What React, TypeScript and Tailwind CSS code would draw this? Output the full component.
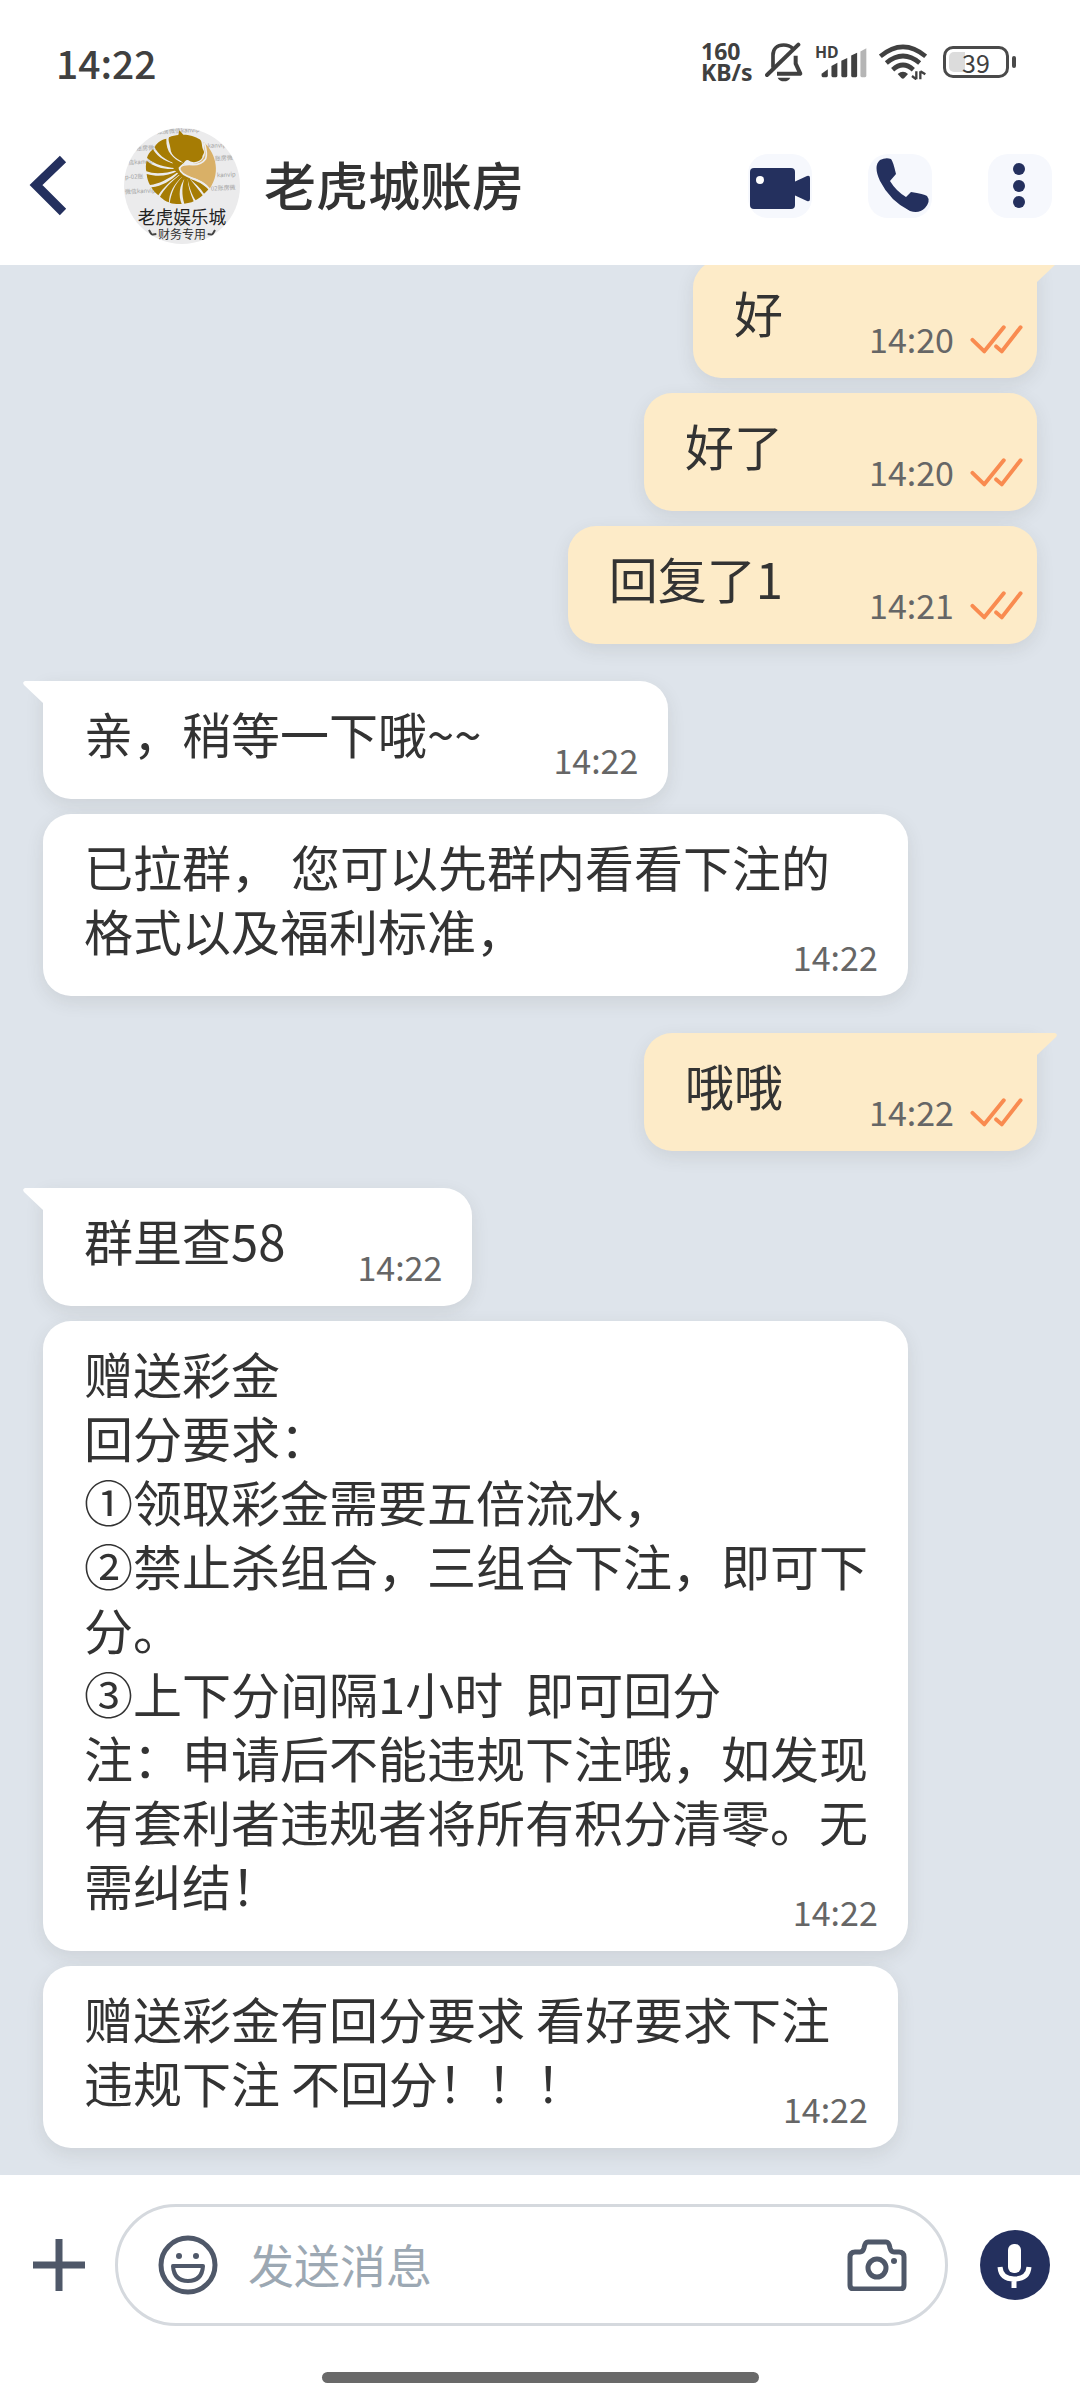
import React, { useState } from "react";

interface Message {
  id: number;
  text: string;
  time: string;
  mine?: boolean;
  // first message of a group, drawn with the little tail
  first?: boolean;
  multiline?: boolean;
}

const messages: Message[] = [
  { id: 1, text: "好", time: "14:20", mine: true, first: true },
  { id: 2, text: "好了", time: "14:20", mine: true },
  { id: 3, text: "回复了1", time: "14:21", mine: true },
  { id: 4, text: "亲，稍等一下哦~~", time: "14:22", first: true },
  { id: 5, text: "已拉群， 您可以先群内看看下注的格式以及福利标准，", time: "14:22", multiline: true },
  { id: 6, text: "哦哦", time: "14:22", mine: true, first: true },
  { id: 7, text: "群里查58", time: "14:22", first: true },
  {
    id: 8,
    text: "赠送彩金\n回分要求：\n①领取彩金需要五倍流水，\n②禁止杀组合，三组合下注，即可下分。\n③上下分间隔1小时  即可回分\n注：申请后不能违规下注哦，如发现有套利者违规者将所有积分清零。无需纠结！",
    time: "14:22",
    multiline: true,
  },
  { id: 9, text: "赠送彩金有回分要求 看好要求下注\n违规下注 不回分！！！", time: "14:22", multiline: true },
];

function StatusBar() {
  return (
    <div className="flex h-[106px] items-center justify-between pt-[18px] pl-14 pr-16 text-[#404040]">
      <span className="text-[39px] leading-none font-medium">14:22</span>
      <div className="flex items-center gap-3">
        <div className="w-[52px] font-['Noto_Sans'] text-[23px] leading-[21px] font-bold">
          <div>160</div>
          <div>KB/s</div>
        </div>
        <svg width="38" height="42" viewBox="20 20 114 126" fill="none" stroke="currentColor">
          <path d="M44 100V62C44 44 56 32 76 32C88 32 97 36 103 42" strokeWidth="11" />
          <path d="M26 122L120 31" strokeWidth="12" strokeLinecap="round" />
          <path d="M112 64V88L126 118H56" strokeWidth="12" strokeLinejoin="round" />
          <path d="M58 130H96C92 138 86 141 77 141C68 141 62 138 58 130Z" fill="currentColor" stroke="none" />
        </svg>
        <svg width="52" height="36" viewBox="166 28 158 104" fill="currentColor">
          <text x="166" y="67" fontSize="48" fontWeight="700" fontFamily="Noto Sans, sans-serif">HD</text>
          <path d="M186 116L205 102V122Q205 126 201 126H190Q186 126 186 122Z" />
          <path d="M216 92L234 82V122Q234 126 230 126H220Q216 126 216 122Z" />
          <path d="M246 76L264 68V122Q264 126 260 126H250Q246 126 246 122Z" />
          <path d="M276 60L294 52V122Q294 126 290 126H280Q276 126 276 122Z" />
          <path d="M304 48L322 38V122Q322 126 318 126H308Q304 126 304 122Z" fill="#b5b5b5" />
        </svg>
        <svg width="48" height="36" viewBox="362 28 144 108" fill="none" stroke="currentColor" strokeWidth="14">
          <path d="M366 65Q434 8 502 65" />
          <path d="M384 85Q434 43 484 85" />
          <path d="M403 105Q434 77 465 105" />
          <path d="M418 118Q434 104 449 118L438 130Q434 134 429 130Z" fill="currentColor" stroke="none" />
          <path d="M474 110V134M486 134V110M474 134L461 124M486 110L501 119" strokeWidth="7" />
        </svg>
        <div className="ml-1 flex items-center gap-[3px]">
          <div className="relative h-8 w-[66px] rounded-[10px] border-[3px] border-[#4a4a4a] p-[3px]">
            <div className="h-full w-4 rounded-l-[5px] bg-[#dcdcdc]" />
            <span className="absolute inset-0 text-center text-[25px] leading-[26px]">39</span>
          </div>
          <div className="h-3 w-1 rounded-full bg-[#4a4a4a]" />
        </div>
      </div>
    </div>
  );
}

function Avatar() {
  return (
    <svg width="116" height="116" viewBox="11 16 348 348" className="shrink-0 rounded-full bg-[#ebebec]">
      <g fill="#a3a3a3" fontSize="18" fontFamily="Noto Sans CJK SC, sans-serif">
        <text x="110" y="34" transform="rotate(-3 110 34)">账房微信kanvip</text>
        <text x="48" y="84" transform="rotate(-3 48 84)">账房微信</text>
        <text x="262" y="76" transform="rotate(-3 262 76)">kanvip</text>
        <text x="24" y="126" transform="rotate(-3 24 126)">信kanvip</text>
        <text x="284" y="114" transform="rotate(-3 284 114)">账房微</text>
        <text x="14" y="170" transform="rotate(-3 14 170)">p-02账</text>
        <text x="290" y="164" transform="rotate(-3 290 164)">kanvip</text>
        <text x="14" y="214" transform="rotate(-3 14 214)">微信kanvip</text>
        <text x="272" y="204" transform="rotate(-3 272 204)">02账房微</text>
      </g>
      {/* tan half of the face */}
      <path d="M250 58C280 84 306 144 268 198C256 180 236 170 212 164C192 158 178 148 179 138C182 122 200 124 218 124C240 122 252 110 254 92Z" fill="#d9b067" />
      {/* head */}
      <path d="M146 44C156 39 166 38 174 37L177 23L189 36C206 36 226 42 238 50C248 58 242 72 250 84C254 92 246 95 246 104C242 116 220 123 208 115C200 109 194 114 190 122C176 108 152 104 150 76C149 64 142 54 146 44Z" fill="#a67c04" />
      {/* mane, fanned out from the cheek */}
      <g fill="#a67c04">
        <path d="M138 48C120 52 108 62 103 74C112 94 134 112 158 120L188 122C158 108 136 88 138 48Z" />
        <path d="M98 80C88 88 82 98 80 106C104 126 134 134 166 136L176 128C142 120 112 106 98 80Z" />
        <path d="M79 114C76 126 76 136 78 146C104 156 136 152 172 142L170 138C136 142 102 134 79 114Z" />
        <path d="M79 154C80 168 84 178 89 187C116 184 140 172 176 146L172 144C144 160 112 164 79 154Z" />
        <path d="M93 194C98 204 106 212 114 218C130 194 150 176 182 152L178 148C150 176 126 190 93 194Z" />
        <path d="M119 222C128 230 136 236 146 239C146 212 160 184 188 160L182 154C154 176 132 198 119 222Z" />
        <path d="M148 240C160 244 172 245 184 244C174 220 176 188 196 164L188 160C162 186 154 210 148 240Z" />
        <path d="M192 243C202 242 212 240 220 236C210 212 202 190 202 166L194 164C184 188 184 218 192 243Z" />
        <path d="M226 233C234 229 242 222 247 218C236 202 220 184 208 168L202 168C206 194 216 218 226 233Z" />
        <path d="M251 213C257 208 262 204 264 200C250 184 232 176 208 168C224 182 240 194 251 213Z" />
        <path d="M156 116L190 120L174 136L184 150L212 168L190 170L160 140Z" />
      </g>
      <path d="M252 60C256 76 262 92 256 108C248 120 234 126 218 126C200 124 178 126 178 140C182 154 196 160 214 166C240 174 256 184 268 200" fill="none" stroke="#ececed" strokeWidth="5" />
      <text x="185" y="304" textAnchor="middle" fontSize="53" fill="#222" fontFamily="Noto Sans CJK SC, sans-serif">老虎娱乐城</text>
      <text x="185" y="350" textAnchor="middle" fontSize="36" fill="#333" fontFamily="Noto Sans CJK SC, sans-serif">财务专用</text>
      <path d="M86 322L94 336L108 334M284 322L276 336L262 334" fill="none" stroke="#444" strokeWidth="6" />
    </svg>
  );
}

function Header() {
  return (
    <header className="flex h-[159px] items-center justify-between px-7">
      <div className="flex items-center">
        <button aria-label="返回" className="mr-14">
          <svg width="40" height="62" viewBox="0 0 40 62" fill="none" stroke="#24305e" strokeWidth="9">
            <path d="M35 4L8 30L35 57" />
          </svg>
        </button>
        <Avatar />
        <h1 className="ml-6 pb-1 text-[52px] leading-none font-medium text-[#333]">老虎城账房</h1>
      </div>
      <div className="flex items-center gap-14 text-[#24305e]">
        <button aria-label="视频通话" className="h-16 w-16 rounded-[20px] bg-[#f6f8fd]">
          <svg width="64" height="64" viewBox="0 0 64 64" fill="currentColor">
            <rect x="2" y="14" width="45" height="41" rx="4" />
            <path d="M46 28L59 22Q62 21 62 24V45Q62 48 59 47L46 41Z" />
            <circle cx="12" cy="26" r="4" fill="#fff" />
          </svg>
        </button>
        <button aria-label="语音通话" className="h-16 w-16 rounded-[20px] bg-[#f6f8fd]">
          <svg width="64" height="64" viewBox="0 0 64 64" fill="currentColor">
            <path d="M12 6Q18 3 23 5Q25 7 28 20L22 27Q28 37 38 43L43 38Q56 40 59 42Q63 47 57 54Q51 60 42 57Q22 47 12 27Q5 12 12 6Z" />
          </svg>
        </button>
        <button aria-label="更多" className="h-16 w-16 rounded-[20px] bg-[#f6f8fd]">
          <svg width="64" height="64" viewBox="0 0 64 64" fill="currentColor">
            <circle cx="31" cy="15" r="6" />
            <circle cx="31" cy="32" r="6" />
            <circle cx="31" cy="48" r="6" />
          </svg>
        </button>
      </div>
    </header>
  );
}

function ReadChecks() {
  return (
    <svg width="53" height="29" viewBox="328 80 160 88" fill="none" stroke="#f98b50" strokeWidth="12" strokeLinecap="round" strokeLinejoin="round">
      <path d="M335 125L371 160L430 87" />
      <path d="M407 145L424 160L481 87" />
    </svg>
  );
}

function Bubble({ message }: { message: Message }) {
  const { text, time, mine, first, multiline } = message;

  return (
    <li
      className={`relative flex w-fit rounded-[28px] pl-[41px] shadow-[0_6px_18px_rgba(60,60,50,0.1)] ${
        mine ? "self-end bg-[#fdebc8] pr-[14px]" : "self-start bg-white pr-[30px]"
      } ${multiline ? "max-w-[87%] min-w-[86%] flex-col" : "items-end"} ${
        first ? (mine ? "rounded-tr-none" : "rounded-tl-none") : ""
      } ${first && message.id > 1 ? "mt-[22px]" : ""}`}
    >
      {first && (
        <svg
          width="22"
          height="22"
          viewBox="0 0 22 22"
          className={mine ? "absolute top-0 left-full -ml-px" : "absolute top-0 right-full -mr-px -scale-x-100"}
        >
          <path d="M0 0H19Q22 1 20 4L1 22H0Z" fill={mine ? "#fdebc8" : "#fff"} />
        </svg>
      )}
      <p
        className={`pt-5 pb-[34px] text-[49px] leading-[64px] whitespace-pre-wrap text-[#333] ${
          multiline ? "pr-1" : ""
        }`}
      >
        {text}
      </p>
      <div
        className={`flex items-center gap-4 self-end pb-[19px] text-[34px] leading-10 text-[#666] ${
          multiline ? "-mt-[59px]" : mine ? "ml-[86px]" : "ml-[72px]"
        }`}
      >
        <span>{time}</span>
        {mine && <ReadChecks />}
      </div>
    </li>
  );
}

function Composer() {
  const [draft, setDraft] = useState("");

  return (
    <footer className="bg-white pt-[29px] text-[#4f5869]">
      <form className="flex items-center pl-[33px] pr-[30px]" onSubmit={(e) => e.preventDefault()}>
        <button type="button" aria-label="添加附件">
          <svg width="52" height="52" viewBox="0 0 52 52" stroke="currentColor" strokeWidth="7">
            <path d="M26 0V52M0 26H52" />
          </svg>
        </button>
        <div className="mr-8 ml-[30px] flex h-[122px] flex-1 items-center rounded-full border-[3px] border-[#d5d9de] pr-[38px] pl-10">
          <button type="button" aria-label="表情">
            <svg width="60" height="60" viewBox="0 0 60 60" fill="none" stroke="currentColor" strokeWidth="5">
              <circle cx="30" cy="30" r="27" />
              <circle cx="21" cy="21" r="3" fill="currentColor" stroke="none" />
              <circle cx="38" cy="21" r="3" fill="currentColor" stroke="none" />
              <path d="M15 31H45Q44 46 30 46Q16 46 15 31Z" strokeWidth="4" strokeLinejoin="round" />
            </svg>
          </button>
          <input
            type="text"
            aria-label="发送消息"
            placeholder="发送消息"
            value={draft}
            onChange={(e) => setDraft(e.target.value)}
            className="ml-[30px] w-0 flex-1 pb-1 text-[46px] leading-[64px] text-[#333] outline-none placeholder:text-[#9ca8b3]"
          />
          <button type="button" aria-label="拍照">
            <svg width="60" height="52" viewBox="0 0 60 52" fill="none" stroke="currentColor" strokeWidth="5" strokeLinejoin="round">
              <path d="M8 13H13Q16 13 17 9Q18 3 21 3H39Q42 3 43 9Q44 13 47 13H52Q57 13 57 18V46Q57 50 53 50H7Q3 50 3 46V18Q3 13 8 13Z" />
              <circle cx="30" cy="29" r="9" />
              <circle cx="47" cy="22" r="3" fill="currentColor" stroke="none" />
            </svg>
          </button>
        </div>
        <button type="button" aria-label="语音消息" className="rounded-full bg-[#24305e]">
          <svg width="70" height="70" viewBox="0 0 70 70" fill="none">
            <rect x="28" y="14" width="13" height="29" rx="6" fill="#fff" />
            <path d="M20 37Q21 49 34 49Q48 49 49 37M34 48V58" stroke="#fff" strokeWidth="5" />
          </svg>
        </button>
      </form>
      <div className="mx-auto mt-[46px] mb-[17px] h-[11px] w-[437px] rounded-full bg-[#696969]" />
    </footer>
  );
}

export default function App() {
  return (
    <div className="flex h-screen flex-col bg-[#dee4eb] font-['Noto_Sans_CJK_SC',sans-serif]">
      <div className="relative z-10 bg-white">
        <StatusBar />
        <Header />
      </div>
      <main className="flex flex-1 flex-col justify-end overflow-hidden">
        <ul className="flex flex-col gap-[15px] px-[43px] pb-[27px]">
          {messages.map((message) => (
            <Bubble key={message.id} message={message} />
          ))}
        </ul>
      </main>
      <Composer />
    </div>
  );
}
